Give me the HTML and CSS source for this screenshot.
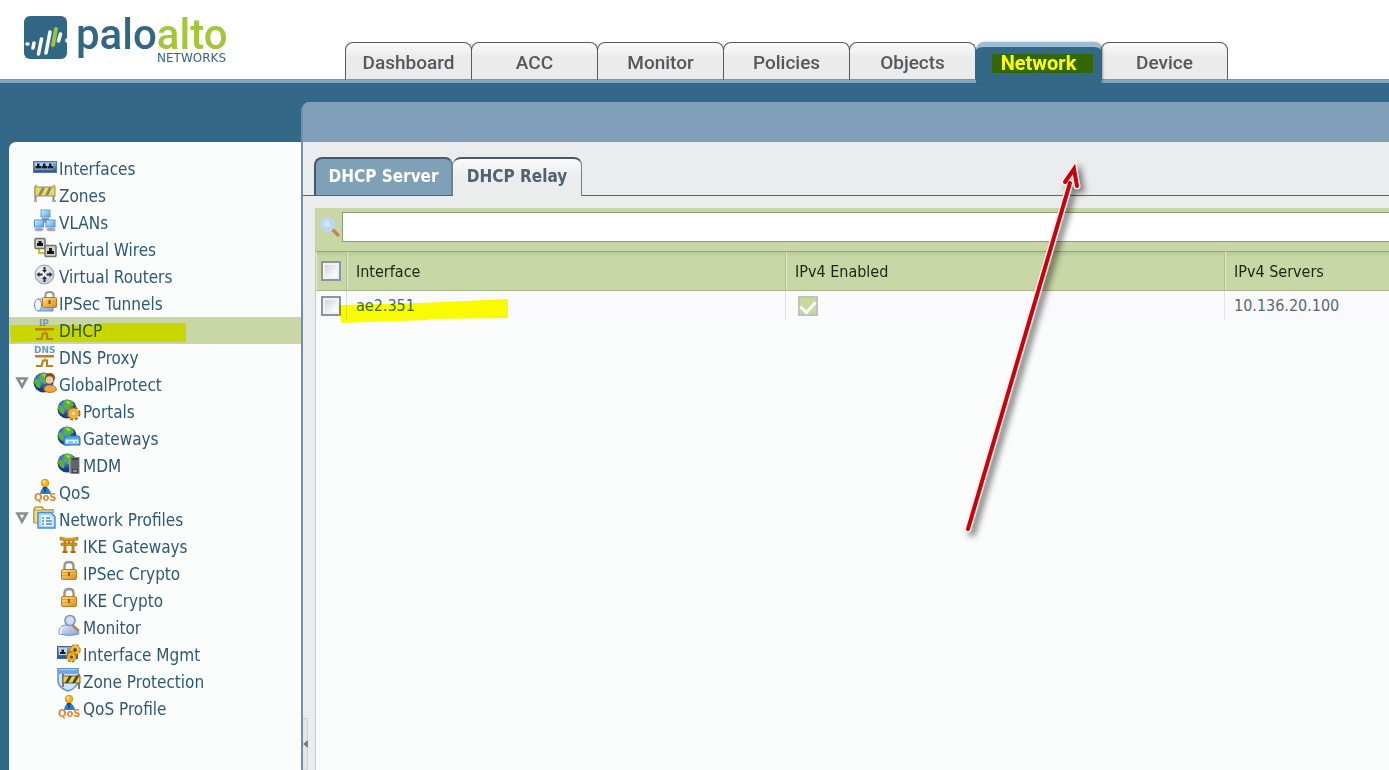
FILE: index.html
```html
<!DOCTYPE html>
<html lang="en">
<head>
<meta charset="utf-8">
<title>Network - DHCP Relay</title>
<link rel="stylesheet" href="styles.css">
</head>
<body>
<svg class="sprite" aria-hidden="true">
  <defs>
    <linearGradient id="gBlue" x1="0" y1="0" x2="0" y2="1"><stop offset="0" stop-color="#8db8ea"/><stop offset="1" stop-color="#23508f"/></linearGradient>
    <linearGradient id="gScreen" x1="0" y1="0" x2="1" y2="1"><stop offset="0" stop-color="#d4f2ff"/><stop offset="1" stop-color="#45a3e6"/></linearGradient>
    <linearGradient id="gGold" x1="0" y1="0" x2="1" y2="1"><stop offset="0" stop-color="#ffe08a"/><stop offset="1" stop-color="#d98a14"/></linearGradient>
    <linearGradient id="gPale" x1="0" y1="0" x2="1" y2="1"><stop offset="0" stop-color="#e4efff"/><stop offset="1" stop-color="#7e9fd6"/></linearGradient>
    <radialGradient id="gRouter" cx=".4" cy=".35"><stop offset="0" stop-color="#ffffff"/><stop offset="1" stop-color="#ccd0dc"/></radialGradient>
    <radialGradient id="gGlobe" cx=".4" cy=".35"><stop offset="0" stop-color="#5ea3e6"/><stop offset="1" stop-color="#123f7d"/></radialGradient>
    <symbol id="globe" viewBox="0 0 24 24">
      <circle cx="10.500" cy="11.500" r="10" fill="url(#gGlobe)"/>
      <path d="M8 2q5-1 8 2l2 4-4 1-1 4-3-1-1-4-3-2zM2 7l4 2 2 4-1 4-3-1-3-5z" fill="#5fae35"/>
      <path d="M9 3l5 1-2 3z" fill="#a5dc6e"/>
    </symbol>
    <symbol id="interfaces" viewBox="0 0 24 24">
      <rect x=".5" y="6.500" width="23" height="11" fill="url(#gBlue)" stroke="#4f7db5"/>
      <rect x="2" y="8" width="18" height="6.500" fill="#b4c8e2"/>
      <path d="M2.500 13.500v-2.500h1.500V8.500h2.500v2.500h1.500v2.500zM8.500 13.500v-2.500h1.500V8.500h2.500v2.500h1.500v2.500zM14.500 13.500v-2.500h1.500V8.500h2.500v2.500h1.500v2.500z" fill="#10192a"/>
    </symbol>
    <symbol id="zones" viewBox="0 0 24 24">
      <path d="M2.500 4v15M20.500 4v15" stroke="#8b8981" stroke-width="2"/>
      <rect x="2" y="5" width="20" height="9" fill="#eadb55" stroke="#8d897c"/>
      <path d="M5 13.500l4-8h3l-4 8zM12 13.500l4-8h3l-4 8z" fill="#8a866f"/>
      <path d="M1 19h3M19 19h4" stroke="#b0aca2" stroke-width="2"/>
      <circle cx="3" cy="4" r="1.500" fill="#c9bb66"/><circle cx="21" cy="4" r="1.500" fill="#c9bb66"/>
    </symbol>
    <symbol id="vlans" viewBox="0 0 24 24">
      <path d="M12 9v4M6 13h12" stroke="#7d9cc0" stroke-width="2"/>
      <rect x="8" y="1" width="9" height="7" fill="url(#gScreen)" stroke="#5e9fda"/><path d="M9 10h7" stroke="#8895ad" stroke-width="2"/>
      <rect x="1.500" y="11" width="9" height="7" fill="url(#gScreen)" stroke="#5e8fd0"/><ellipse cx="6" cy="20.500" rx="4.500" ry="1.800" fill="#a6a0c8"/>
      <rect x="13" y="11" width="9" height="7" fill="url(#gScreen)" stroke="#5e8fd0"/><ellipse cx="18" cy="20.500" rx="4.500" ry="1.800" fill="#a6a0c8"/>
    </symbol>
    <symbol id="wires" viewBox="0 0 24 24">
      <path d="M6 11v6h8" fill="none" stroke="#d8bd20" stroke-width="2"/>
      <rect x="2" y="2.500" width="10" height="10" rx="1" fill="#cfcfcb" stroke="#73736e" stroke-width="1.500"/><path d="M4 10V7h1.500V5h3v2H10v3z" fill="#151515"/>
      <rect x="12" y="9.500" width="11" height="11" rx="1" fill="#cfcfcb" stroke="#73736e" stroke-width="1.500"/><path d="M14 18v-3h2v-3h3v3h2v3z" fill="#151515"/>
    </symbol>
    <symbol id="router" viewBox="0 0 24 24">
      <circle cx="11.500" cy="11.500" r="9.500" fill="url(#gRouter)" stroke="#999fb0"/>
      <path d="M11.500 10l2.500-3h-1.500V4h-2v3H9zM11.500 13l2.500 3h-1.500v3h-2v-3H9zM3.500 11.500l3-2.500v1.500h3v2h-3V14zM19.500 11.500l-3-2.500v1.500h-3v2h3V14z" fill="#28303c"/>
    </symbol>
    <symbol id="lock" viewBox="0 0 24 24">
      <path d="M7.500 10V6q0-4 4.500-4t4.500 4v4" fill="none" stroke="#98958c" stroke-width="2.400"/>
      <rect x="4.500" y="9.500" width="15" height="10" rx="1.500" fill="url(#gGold)" stroke="#bd7b23"/>
      <path d="M5 12.500h14M5 15.500h14" stroke="#e3a035"/><path d="M12 12v4" stroke="#9c600f" stroke-width="2"/>
    </symbol>
    <symbol id="tunnel" viewBox="0 0 24 24">
      <path d="M5 9h15v12H5z" fill="url(#gPale)" stroke="#6c90c9"/><ellipse cx="5" cy="15" rx="3.500" ry="6" fill="#edf5ff" stroke="#6c90c9"/>
      <path d="M12.500 8V5q0-3 4-3t4 3v3" fill="none" stroke="#98958c" stroke-width="2"/>
      <rect x="9.500" y="7.500" width="14" height="10" rx="1" fill="url(#gGold)" stroke="#bd7b23"/><path d="M16.500 10v4" stroke="#8a5209" stroke-width="2"/>
    </symbol>
    <symbol id="relay" viewBox="0 0 24 24">
      <path d="M2 11h19v2.500H2z" fill="#b98316"/>
      <path d="M3 22h5.500l1.500-5.500h4V22h6" fill="none" stroke="#b98316" stroke-width="2.200"/><path d="M12 14v3" stroke="#b98316"/>
    </symbol>
    <symbol id="gprotect" viewBox="0 0 24 24">
      <use href="#globe" width="24" height="24"/>
      <circle cx="17" cy="7" r="5" fill="#85501f"/><circle cx="16.500" cy="9" r="3.700" fill="#f2c79c"/>
      <path d="M11 19q0-5 6-5t6.500 5q-3 2.500-6.500 2.500T11 19z" fill="#f0a340" stroke="#c77517"/>
    </symbol>
    <symbol id="portal" viewBox="0 0 24 24">
      <use href="#globe" width="23" height="23"/>
      <circle cx="16.500" cy="15.500" r="5" fill="none" stroke="#ab6b10" stroke-width="4" stroke-dasharray="2.500 1.500"/>
      <circle cx="16.500" cy="15.500" r="3.500" fill="#fbe6b0" stroke="#f2b235" stroke-width="3.500"/>
    </symbol>
    <symbol id="gateway" viewBox="0 0 24 24">
      <use href="#globe" width="23" height="23"/>
      <path d="M8 13l2-2h12l1 2v7H7v-7z" fill="#55a6df" stroke="#2b78b9"/><path d="M8.500 14.500h13v4h-13z" fill="#d9f1fc"/><path d="M11 17h5M18 17h2" stroke="#5393bd"/>
    </symbol>
    <symbol id="mdm" viewBox="0 0 24 24">
      <use href="#globe" width="23" height="23"/>
      <path d="M12 7h3v14h-3z" fill="#9b9b9b"/><rect x="14" y="5.500" width="8" height="16" fill="#444" stroke="#838383"/><path d="M15 8h6v9h-6z" fill="#606468"/><path d="M16 19h4" stroke="#ddd"/>
    </symbol>
    <symbol id="qos" viewBox="0 0 24 24">
      <path d="M7 15q0-3 3-7h4q4 4 4 7z" fill="#2e7dcb"/><path d="M10 8l2 7 2-7z" fill="#164b8e"/>
      <circle cx="12" cy="4" r="3.700" fill="#f4b324" stroke="#da8d14"/><circle cx="11" cy="3" r="1.400" fill="#ffe78d"/>
    </symbol>
    <symbol id="profiles" viewBox="0 0 24 24">
      <path d="M1 17V3l2-2h6l2 3h9v3" fill="#fbeeb5" stroke="#b39a32" stroke-width="1.500"/><path d="M1 4v13h4V7h15V4z" fill="#f3dd88" stroke="#b39a32"/>
      <path d="M5 6.500h13l4 4V22H5z" fill="#acd6fa" stroke="#4b8fcc" stroke-width="1.400"/><path d="M8 9h8l4 4v7H8z" fill="#e5f5ff"/>
      <path d="M9 12h2M13 12h4M9 15h2M13 15h6M9 18h2M13 18h6" stroke="#4389c9" stroke-width="1.400"/>
    </symbol>
    <symbol id="torii" viewBox="0 0 24 24">
      <path d="M3 4q9 3 18 0v3q-9 2-18 0zM4 10h16v2.500H4z" fill="#d49b1d" stroke="#a16d0d" stroke-width=".6"/>
      <path d="M8 7v12M16 7v12" stroke="#c08515" stroke-width="3"/><path d="M5.500 19h5M13.500 19h5" stroke="#a16d0d" stroke-width="2"/><path d="M12 7v4" stroke="#b87c12" stroke-width="2"/>
    </symbol>
    <symbol id="monitor" viewBox="0 0 24 24">
      <path d="M2 20q-1-8 6-9h6q7 1 8 9-9 3-20 0z" fill="url(#gPale)" stroke="#7592c7"/>
      <circle cx="13" cy="6.500" r="5" fill="#cfdef5" stroke="#8394b8" stroke-width="1.700"/><path d="M15 11l7 6" stroke="#b5844f" stroke-width="2.500"/><path d="M5 13q-2 4-1 7" stroke="#eff6ff" stroke-width="2" fill="none"/>
    </symbol>
    <symbol id="mgmt" viewBox="0 0 24 24">
      <rect x=".5" y="5.500" width="20" height="12" fill="url(#gBlue)" stroke="#3f6596"/><rect x="2" y="7" width="8" height="7" fill="#c6d5e8"/><path d="M3 13v-2h1.500V8.500h2.500V11h1.500v2z" fill="#10192a"/>
      <circle cx="18" cy="9" r="4" fill="#6c4a10" stroke="#b97a11" stroke-width="3.500" stroke-dasharray="2.200 1"/><circle cx="18" cy="9" r="3.300" fill="none" stroke="#f4be2f" stroke-width="2.800"/>
      <circle cx="14.500" cy="16" r="3.700" fill="#6c4a10" stroke="#9d650c" stroke-width="3.500" stroke-dasharray="2.200 1"/><circle cx="14.500" cy="16" r="3" fill="none" stroke="#efae20" stroke-width="2.800"/>
    </symbol>
    <symbol id="zoneprot" viewBox="0 0 24 24">
      <path d="M1 .5h20V15q-3 6-10 8Q3 21 1 14z" fill="#cde5fb" stroke="#5e8fc9" stroke-width="1.500"/><path d="M2 2h18v4H2z" fill="#6ca8e2"/>
      <path d="M6 6v13M22 6v15" stroke="#77777a" stroke-width="2"/><rect x="6" y="8" width="17" height="7" fill="#ecd02f" stroke="#666"/><path d="M8 15l4-7h3l-4 7zM15 15l4-7h3l-4 7z" fill="#414141"/>
    </symbol>
    <symbol id="toggle" viewBox="0 0 14 14"><path d="M2.500 2.500h9L7 10.500z" fill="#fff" stroke="#8c8c8c" stroke-width="2.600"/></symbol>
  </defs>
</svg>

<header class="top">
  <a class="logo" href="#" aria-label="Palo Alto Networks">
    <svg width="210" height="66" viewBox="0 -8 210 66">
      <rect x="2" y="4" width="43" height="43" rx="6" fill="#316785"/>
      <g fill="none" stroke="#f4fbff" stroke-width="3.600" stroke-linecap="round">
        <path d="M5 32h1M12 31l-1 5M19.500 27l-3 15M28 20l-4 21M38.500 22l-2 7M45 28v1"/>
        <path d="M34 17l-3 16" stroke="#9cc53b" stroke-width="4"/>
      </g>
      <text class="logo-name" x="54" y="37">palo<tspan class="logo-accent">alto</tspan></text>
      <text class="logo-sub" x="135" y="50">NETWORKS</text>
    </svg>
  </a>
  <nav class="tabs" aria-label="Main">
    <a class="tab" href="#">Dashboard</a>
    <a class="tab" href="#">ACC</a>
    <a class="tab" href="#">Monitor</a>
    <a class="tab" href="#">Policies</a>
    <a class="tab" href="#">Objects</a>
    <a class="tab tab-active" href="#" aria-current="page">Network<span class="marker marker-tab"></span></a>
    <a class="tab" href="#">Device</a>
  </nav>
</header>

<div class="body">
  <nav class="sidebar" aria-label="Network">
    <ul class="tree">
      <li class="row"><a href="#"><svg class="icon"><use href="#interfaces"/></svg>Interfaces</a></li>
      <li class="row"><a href="#"><svg class="icon"><use href="#zones"/></svg>Zones</a></li>
      <li class="row"><a href="#"><svg class="icon"><use href="#vlans"/></svg>VLANs</a></li>
      <li class="row"><a href="#"><svg class="icon"><use href="#wires"/></svg>Virtual Wires</a></li>
      <li class="row"><a href="#"><svg class="icon"><use href="#router"/></svg>Virtual Routers</a></li>
      <li class="row"><a href="#"><svg class="icon"><use href="#tunnel"/></svg>IPSec Tunnels</a></li>
      <li class="row row-selected"><a href="#" aria-current="true"><svg class="icon"><use href="#relay"/><text class="icon-ip" x="6" y="9">IP</text></svg>DHCP</a>
        <svg class="marker-row" viewBox="0 0 178 26" width="178" height="26"><path d="M1 8l88 0 1-2h87v19H12L2 26z" fill="#ff0"/></svg></li>
      <li class="row"><a href="#"><svg class="icon"><use href="#relay"/><text class="icon-ip" x="1" y="9">DNS</text></svg>DNS Proxy</a></li>
      <li class="row"><button class="toggle" aria-label="Collapse GlobalProtect"><svg width="14" height="14"><use href="#toggle"/></svg></button><a href="#"><svg class="icon"><use href="#gprotect"/></svg>GlobalProtect</a></li>
      <li><ul class="tree sub">
        <li class="row"><a href="#"><svg class="icon"><use href="#portal"/></svg>Portals</a></li>
        <li class="row"><a href="#"><svg class="icon"><use href="#gateway"/></svg>Gateways</a></li>
        <li class="row"><a href="#"><svg class="icon"><use href="#mdm"/></svg>MDM</a></li>
      </ul></li>
      <li class="row"><a href="#"><svg class="icon"><use href="#qos"/><text class="icon-qos" x="1" y="22">QoS</text></svg>QoS</a></li>
      <li class="row"><button class="toggle" aria-label="Collapse Network Profiles"><svg width="14" height="14"><use href="#toggle"/></svg></button><a href="#"><svg class="icon"><use href="#profiles"/></svg>Network Profiles</a></li>
      <li><ul class="tree sub">
        <li class="row"><a href="#"><svg class="icon"><use href="#torii"/></svg>IKE Gateways</a></li>
        <li class="row"><a href="#"><svg class="icon"><use href="#lock"/></svg>IPSec Crypto</a></li>
        <li class="row"><a href="#"><svg class="icon"><use href="#lock"/></svg>IKE Crypto</a></li>
        <li class="row"><a href="#"><svg class="icon"><use href="#monitor"/></svg>Monitor</a></li>
        <li class="row"><a href="#"><svg class="icon"><use href="#mgmt"/></svg>Interface Mgmt</a></li>
        <li class="row"><a href="#"><svg class="icon"><use href="#zoneprot"/></svg>Zone Protection</a></li>
        <li class="row"><a href="#"><svg class="icon"><use href="#qos"/><text class="icon-qos" x="1" y="22">QoS</text></svg>QoS Profile</a></li>
      </ul></li>
    </ul>
  </nav>

  <main class="main">
    <div class="band"></div>
    <div class="subtabs">
      <a class="subtab" href="#">DHCP Server</a>
      <a class="subtab subtab-active" href="#" aria-current="page">DHCP Relay</a>
    </div>
    <div class="content">
      <div class="splitter"><button class="collapse" aria-label="Collapse navigation"><svg width="5" height="8" viewBox="0 0 5 8"><path d="M5 0v8L0 4z" fill="#777b84"/></svg></button></div>
      <section class="panel">
        <form class="search">
          <label for="filter" aria-label="Filter">
            <svg width="20" height="20" viewBox="0 0 20 20"><path d="M13 13l5 5" stroke="#c08a52" stroke-width="3.500" stroke-linecap="round"/><circle cx="7.500" cy="7.500" r="6.500" fill="#b5d6fb" stroke="#c5d8ee" stroke-width="1.500"/><circle cx="7" cy="7" r="3.500" fill="#cfe4ff"/></svg>
          </label>
          <input id="filter" class="filter" type="text">
        </form>
        <table class="grid">
          <colgroup><col class="col-check"><col class="col-wide"><col class="col-wide"><col></colgroup>
          <thead>
            <tr><th><input class="box" type="checkbox" aria-label="Select all"></th><th>Interface</th><th>IPv4 Enabled</th><th>IPv4 Servers</th></tr>
          </thead>
          <tbody>
            <tr>
              <td><input class="box" type="checkbox" aria-label="Select ae2.351"></td>
              <td><a class="iface" href="#">ae2.351</a><svg class="marker-cell" width="170" height="26" viewBox="0 0 170 26"><path d="M1 6l82-2 87-4v19l-79 1-2 1-86 3z" fill="#ff0"/></svg></td>
              <td><input class="box box-on" type="checkbox" checked disabled aria-label="IPv4 enabled"></td>
              <td>10.136.20.100</td>
            </tr>
          </tbody>
        </table>
      </section>
    </div>
  </main>
</div>

<svg class="arrow" width="150" height="400" viewBox="0 0 150 400" aria-hidden="true">
  <g fill="none" stroke-linejoin="miter">
    <path d="M13 374L115 28M110 27L119 14 122 31" stroke="#fbeee6" stroke-width="7" stroke-linecap="round"/>
    <path d="M13 374L115 28M110 27L119 14 122 31" stroke="#c9000e" stroke-width="4" stroke-linecap="round"/>
  </g>
</svg>
</body>
</html>
```
FILE: styles.css
```css
* { box-sizing: border-box; }

body {
  margin: 0;
  min-height: 100vh;
  display: flex;
  flex-direction: column;
  position: relative;
  overflow-x: hidden;
  background: #336888;
  font-family: "DejaVu Sans Condensed", "Noto Sans", sans-serif;
  font-size: 16px;
}

a { color: inherit; text-decoration: none; }
button { padding: 0; border: 0; background: none; cursor: pointer; }
.sprite { position: absolute; width: 0; height: 0; }

/* Header */
.top {
  display: flex;
  align-items: flex-end;
  height: 83px;
  padding-left: 22px;
  background: linear-gradient(#fff 79px, #8a9298 79px, #8a9298 80px, #7fa6c4 80px);
}
.logo { width: 323px; padding-bottom: 13px; }
.logo svg { display: block; }
.logo-name { font: 500 42px Roboto, sans-serif; fill: #316785; }
.logo-accent { fill: #a4c639; }
.logo-sub { font: 12px "DejaVu Sans", sans-serif; fill: #316785; }

.tabs { display: flex; height: 41px; }
.tab {
  position: relative;
  width: 127px;
  height: 38px;
  margin-right: -1px;
  border: 1px solid #5b5b55;
  border-bottom-color: #8a9298;
  border-radius: 8px 8px 0 0;
  background: linear-gradient(#fbfbf8, #ebebec 40%);
  color: #55585a;
  font: 500 19px/39px Roboto, sans-serif;
  text-align: center;
}
.tab-active {
  z-index: 1;
  width: 125px;
  margin: 0 0 0 1px;
  height: 41px;
  border: 0;
  border-top: 5px solid #9dbdd4;
  background: #336888;
  box-shadow: 2px 0 3px -1px #555;
  color: #fff;
  font-size: 20px;
  font-weight: 700;
  line-height: 32px;
}
.marker { position: absolute; background: #ff0; mix-blend-mode: multiply; }
.marker-tab { left: 16px; top: 7px; width: 101px; height: 19px; }

/* Body */
.body { flex: 1; display: flex; padding: 19px 0 0 9px; }

.sidebar {
  width: 292px;
  flex: none;
  margin-top: 40px;
  padding-top: 13px;
  border-radius: 7px 0 0 0;
  background: #fbfdfd;
  color: #2d5876;
  font-size: 17px;
}
.tree { margin: 0; padding: 0; list-style: none; }
.row { position: relative; display: flex; height: 27px; padding-left: 24px; line-height: 28px; }
.sub .row { padding-left: 48px; }
.row a { display: flex; gap: 2px; }
.row-selected { background: #c9d7a7; }
.icon { width: 24px; height: 24px; }
.icon-ip { font: bold 9px "DejaVu Sans", sans-serif; fill: #6f97c0; }
.icon-qos { font: bold 10px "DejaVu Sans", sans-serif; fill: #e08a35; }
.toggle { width: 14px; height: 27px; margin: 0 4px 0 -18px; }
.marker-row { position: absolute; left: 0; top: 0; mix-blend-mode: multiply; }

/* Main */
.main {
  flex: 1;
  min-width: 0;
  display: flex;
  flex-direction: column;
  border-left: 2px solid #7490a8;
  border-radius: 9px 0 0 0;
  background: #ebecee;
}
.band { height: 40px; border-radius: 6px 0 0 0; background: #819fb9; }
.subtabs { display: flex; height: 54px; padding: 15px 0 0 11px; border-bottom: 1px solid #55626e; }
.subtab {
  height: 38px;
  width: 139px;
  border: 2px solid #46586a;
  border-right-color: #737e88;
  border-bottom: 0;
  border-radius: 8px 8px 0 0;
  background: #7fa1b8;
  color: #fff;
  font: bold 17px/34px "DejaVu Sans Condensed", sans-serif;
  text-align: center;
}
.subtab-active {
  height: 39px;
  width: 129px;
  border-width: 2px 1px 0 0;
  background: linear-gradient(#fafafc, #ebecee 50%);
  color: #51616f;
}

.content { flex: 1; display: flex; }
.splitter { width: 12px; flex: none; display: flex; flex-direction: column; justify-content: flex-end; align-items: flex-start; }
.collapse { width: 5px; height: 52px; border: 1px solid #d0d3d8; border-left: 0; background: #e4e6ea; }
.collapse svg { display: block; }

.panel { flex: 1; min-width: 0; margin-top: 12px; border-left: 1px solid #c3c8c8; background: #fbfdfd; }
.search { display: flex; height: 43px; padding: 4px 0 9px 4px; background: #c9d6a5; }
.search label { width: 22px; padding-top: 5px; }
.filter { flex: 1; min-width: 0; border: 1px solid #8d9a78; border-right: 0; background: #fff; font: inherit; padding: 0 6px; }

.grid { width: 100%; table-layout: fixed; border-collapse: separate; border-spacing: 0; }
.col-check { width: 30px; }
.col-wide { width: 439px; }
.grid th {
  height: 40px;
  padding: 0 9px;
  border-top: 1px solid #98a380;
  border-bottom: 1px solid #a9b68a;
  border-left: 1px solid #b3bf93;
  background: linear-gradient(#b9c698, #c9d6a5 5px);
  box-shadow: inset 1px 0 #e2ebc8;
  color: #1f2418;
  font-weight: 400;
  text-align: left;
}
.grid td { position: relative; height: 29px; padding: 0 9px; border-left: 1px solid #dfe3e6; background: #fafafc; color: #566a76; }
.grid th:first-child, .grid td:first-child { padding: 0 0 0 5px; border-left: 0; }
.iface { color: #3e7290; }
.marker-cell { position: absolute; left: -9px; top: 8px; z-index: 1; mix-blend-mode: multiply; }

.box {
  appearance: none;
  display: block;
  width: 20px;
  height: 20px;
  margin: 0;
  border: 2px solid #8d959b;
  background: linear-gradient(135deg, #c9ccd4, #fff 80%);
  box-shadow: inset 0 0 0 2px #f1f2f4;
}
.box-on {
  margin-left: 3px;
  border-color: #bcc4b4;
  background: #c9d99a linear-gradient(#c9d99a, #c9d99a);
  box-shadow: none;
}
.box-on::after {
  content: "";
  display: block;
  width: 7px;
  height: 12px;
  margin: 0 auto;
  border: solid #fff;
  border-width: 0 3px 3px 0;
  transform: rotate(42deg);
}

/* Pointer drawn over the page */
.arrow { position: absolute; left: 955px; top: 155px; pointer-events: none; filter: drop-shadow(4px 4px 3px rgba(0, 0, 0, .5)); }
```
